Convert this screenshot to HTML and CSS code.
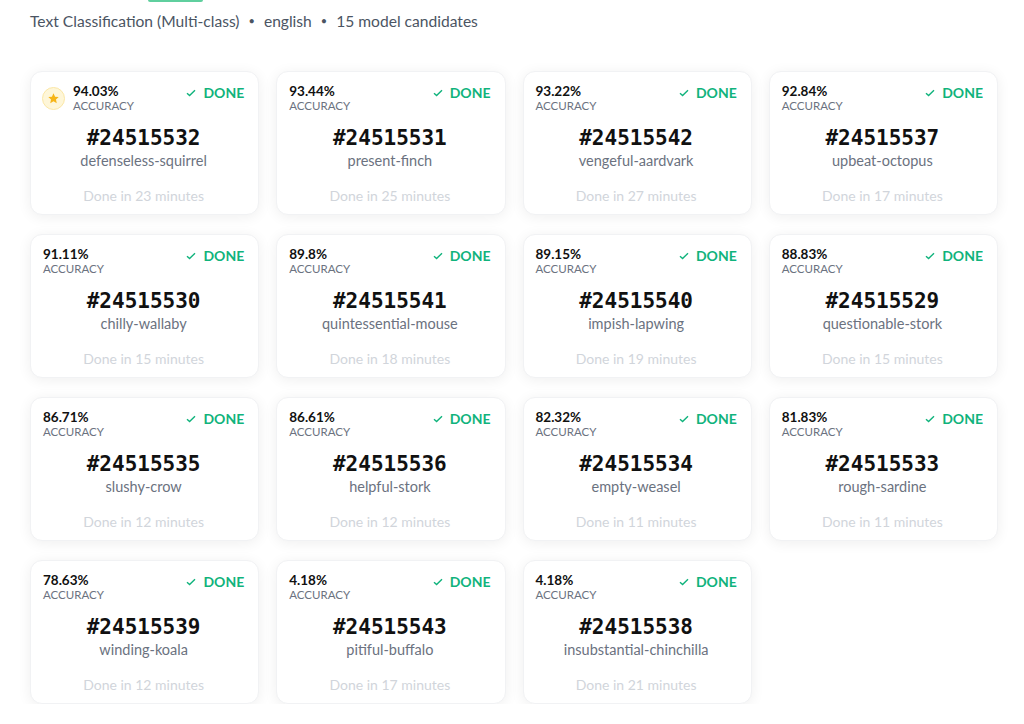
FILE: index.html
```html
<!DOCTYPE html>
<html>
<head>
<meta charset="UTF-8">
<title>Model candidates</title>
<link rel="stylesheet" href="styles.css">
</head>
<body>

<div class="tabbar"><span class="tab-active"></span></div>

<div class="summary">
	Text Classification (Multi-class)
	<span class="dot">&bull;</span> english
	<span class="dot">&bull;</span> 15 model candidates
</div>

<div class="grid">

	<div class="card">
		<div class="top">
			<div class="score">
				<span class="star">
					<svg width="13" height="13" viewBox="0 0 24 24"><path d="M12 2.5l2.9 6.2 6.7.7-5 4.6 1.4 6.7L12 17.3l-6 3.4 1.4-6.7-5-4.6 6.7-.7z" fill="#f6b517"/></svg>
				</span>
				<div>
					<div class="pct">94.03%</div>
					<div class="label">ACCURACY</div>
				</div>
			</div>
			<div class="status"><svg width="10" height="8" viewBox="0 0 10 8"><path d="M1 4.2l2.6 2.4L9 1.2" fill="none" stroke="#10b37c" stroke-width="1.4"/></svg>DONE</div>
		</div>
		<div class="id">#24515532</div>
		<div class="name">defenseless-squirrel</div>
		<div class="time">Done in 23 minutes</div>
	</div>

	<div class="card">
		<div class="top">
			<div class="score"><div><div class="pct">93.44%</div><div class="label">ACCURACY</div></div></div>
			<div class="status"><svg width="10" height="8" viewBox="0 0 10 8"><path d="M1 4.2l2.6 2.4L9 1.2" fill="none" stroke="#10b37c" stroke-width="1.4"/></svg>DONE</div>
		</div>
		<div class="id">#24515531</div>
		<div class="name">present-finch</div>
		<div class="time">Done in 25 minutes</div>
	</div>

	<div class="card">
		<div class="top">
			<div class="score"><div><div class="pct">93.22%</div><div class="label">ACCURACY</div></div></div>
			<div class="status"><svg width="10" height="8" viewBox="0 0 10 8"><path d="M1 4.2l2.6 2.4L9 1.2" fill="none" stroke="#10b37c" stroke-width="1.4"/></svg>DONE</div>
		</div>
		<div class="id">#24515542</div>
		<div class="name">vengeful-aardvark</div>
		<div class="time">Done in 27 minutes</div>
	</div>

	<div class="card">
		<div class="top">
			<div class="score"><div><div class="pct">92.84%</div><div class="label">ACCURACY</div></div></div>
			<div class="status"><svg width="10" height="8" viewBox="0 0 10 8"><path d="M1 4.2l2.6 2.4L9 1.2" fill="none" stroke="#10b37c" stroke-width="1.4"/></svg>DONE</div>
		</div>
		<div class="id">#24515537</div>
		<div class="name">upbeat-octopus</div>
		<div class="time">Done in 17 minutes</div>
	</div>

	<div class="card">
		<div class="top">
			<div class="score"><div><div class="pct">91.11%</div><div class="label">ACCURACY</div></div></div>
			<div class="status"><svg width="10" height="8" viewBox="0 0 10 8"><path d="M1 4.2l2.6 2.4L9 1.2" fill="none" stroke="#10b37c" stroke-width="1.4"/></svg>DONE</div>
		</div>
		<div class="id">#24515530</div>
		<div class="name">chilly-wallaby</div>
		<div class="time">Done in 15 minutes</div>
	</div>

	<div class="card">
		<div class="top">
			<div class="score"><div><div class="pct">89.8%</div><div class="label">ACCURACY</div></div></div>
			<div class="status"><svg width="10" height="8" viewBox="0 0 10 8"><path d="M1 4.2l2.6 2.4L9 1.2" fill="none" stroke="#10b37c" stroke-width="1.4"/></svg>DONE</div>
		</div>
		<div class="id">#24515541</div>
		<div class="name">quintessential-mouse</div>
		<div class="time">Done in 18 minutes</div>
	</div>

	<div class="card">
		<div class="top">
			<div class="score"><div><div class="pct">89.15%</div><div class="label">ACCURACY</div></div></div>
			<div class="status"><svg width="10" height="8" viewBox="0 0 10 8"><path d="M1 4.2l2.6 2.4L9 1.2" fill="none" stroke="#10b37c" stroke-width="1.4"/></svg>DONE</div>
		</div>
		<div class="id">#24515540</div>
		<div class="name">impish-lapwing</div>
		<div class="time">Done in 19 minutes</div>
	</div>

	<div class="card">
		<div class="top">
			<div class="score"><div><div class="pct">88.83%</div><div class="label">ACCURACY</div></div></div>
			<div class="status"><svg width="10" height="8" viewBox="0 0 10 8"><path d="M1 4.2l2.6 2.4L9 1.2" fill="none" stroke="#10b37c" stroke-width="1.4"/></svg>DONE</div>
		</div>
		<div class="id">#24515529</div>
		<div class="name">questionable-stork</div>
		<div class="time">Done in 15 minutes</div>
	</div>

	<div class="card">
		<div class="top">
			<div class="score"><div><div class="pct">86.71%</div><div class="label">ACCURACY</div></div></div>
			<div class="status"><svg width="10" height="8" viewBox="0 0 10 8"><path d="M1 4.2l2.6 2.4L9 1.2" fill="none" stroke="#10b37c" stroke-width="1.4"/></svg>DONE</div>
		</div>
		<div class="id">#24515535</div>
		<div class="name">slushy-crow</div>
		<div class="time">Done in 12 minutes</div>
	</div>

	<div class="card">
		<div class="top">
			<div class="score"><div><div class="pct">86.61%</div><div class="label">ACCURACY</div></div></div>
			<div class="status"><svg width="10" height="8" viewBox="0 0 10 8"><path d="M1 4.2l2.6 2.4L9 1.2" fill="none" stroke="#10b37c" stroke-width="1.4"/></svg>DONE</div>
		</div>
		<div class="id">#24515536</div>
		<div class="name">helpful-stork</div>
		<div class="time">Done in 12 minutes</div>
	</div>

	<div class="card">
		<div class="top">
			<div class="score"><div><div class="pct">82.32%</div><div class="label">ACCURACY</div></div></div>
			<div class="status"><svg width="10" height="8" viewBox="0 0 10 8"><path d="M1 4.2l2.6 2.4L9 1.2" fill="none" stroke="#10b37c" stroke-width="1.4"/></svg>DONE</div>
		</div>
		<div class="id">#24515534</div>
		<div class="name">empty-weasel</div>
		<div class="time">Done in 11 minutes</div>
	</div>

	<div class="card">
		<div class="top">
			<div class="score"><div><div class="pct">81.83%</div><div class="label">ACCURACY</div></div></div>
			<div class="status"><svg width="10" height="8" viewBox="0 0 10 8"><path d="M1 4.2l2.6 2.4L9 1.2" fill="none" stroke="#10b37c" stroke-width="1.4"/></svg>DONE</div>
		</div>
		<div class="id">#24515533</div>
		<div class="name">rough-sardine</div>
		<div class="time">Done in 11 minutes</div>
	</div>

	<div class="card">
		<div class="top">
			<div class="score"><div><div class="pct">78.63%</div><div class="label">ACCURACY</div></div></div>
			<div class="status"><svg width="10" height="8" viewBox="0 0 10 8"><path d="M1 4.2l2.6 2.4L9 1.2" fill="none" stroke="#10b37c" stroke-width="1.4"/></svg>DONE</div>
		</div>
		<div class="id">#24515539</div>
		<div class="name">winding-koala</div>
		<div class="time">Done in 12 minutes</div>
	</div>

	<div class="card">
		<div class="top">
			<div class="score"><div><div class="pct">4.18%</div><div class="label">ACCURACY</div></div></div>
			<div class="status"><svg width="10" height="8" viewBox="0 0 10 8"><path d="M1 4.2l2.6 2.4L9 1.2" fill="none" stroke="#10b37c" stroke-width="1.4"/></svg>DONE</div>
		</div>
		<div class="id">#24515543</div>
		<div class="name">pitiful-buffalo</div>
		<div class="time">Done in 17 minutes</div>
	</div>

	<div class="card">
		<div class="top">
			<div class="score"><div><div class="pct">4.18%</div><div class="label">ACCURACY</div></div></div>
			<div class="status"><svg width="10" height="8" viewBox="0 0 10 8"><path d="M1 4.2l2.6 2.4L9 1.2" fill="none" stroke="#10b37c" stroke-width="1.4"/></svg>DONE</div>
		</div>
		<div class="id">#24515538</div>
		<div class="name">insubstantial-chinchilla</div>
		<div class="time">Done in 21 minutes</div>
	</div>

</div>

</body>
</html>
```

FILE: styles.css
```css
body
{
	margin: 0;
	background: #fff;
	font-family: "Lato", "Noto Sans", sans-serif;
	color: #111827;
}

/* tab strip at the very top, only the active underline shows */
.tabbar { height: 2px; padding-left: 148px; }
.tab-active
{
	display: block;
	width: 55px; height: 2px;
	background: #5fcf9e;
	border-radius: 0 0 2px 2px;
}

.summary
{
	padding: 9px 30px 0;
	font-size: 15.6px;
	line-height: 20px;
	color: #4b5563;
}
.dot { font-size: 11px; margin: 0 5px; vertical-align: 2px; color: #4b5563; }

.grid
{
	display: grid;
	grid-template-columns: repeat(4, 1fr);
	column-gap: 17px;
	row-gap: 19px;
	width: 968px;
	padding: 40px 0 0 30px;
}

.card
{
	height: 144px;
	box-sizing: border-box;
	padding: 11px 14px 0 12px;
	background: #fff;
	border: 1px solid #f1f2f4;
	border-radius: 12px;
	box-shadow: 0 2px 14px rgba(0, 0, 0, 0.065);
	text-align: center;
}

.top { display: flex; justify-content: space-between; align-items: flex-start; text-align: left; }
.score { display: flex; align-items: center; gap: 8px; }

.star
{
	display: flex; align-items: center; justify-content: center;
	width: 21px; height: 21px;
	margin-left: -1px;
	border-radius: 50%;
	background: #fef6d8;
	border: 1px solid #fbe7a6;
}

.pct { font-size: 13.5px; font-weight: bold; line-height: 16px; color: #111; }
.label { font-size: 11.5px; line-height: 14px; color: #6b7280; }

.status
{
	display: flex; align-items: center; gap: 7px;
	margin-top: 2px;
	font-size: 14px; font-weight: bold; line-height: 16px;
	color: #10b37c;
}

.id
{
	margin-top: 12px;
	font-family: "DejaVu Sans Mono", monospace;
	font-size: 21px; font-weight: bold;
	line-height: 26px;
	color: #111;
}
.name { font-size: 14.5px; line-height: 20px; color: #6b7280; }
.time { margin-top: 15px; font-size: 14px; line-height: 20px; color: #d1d5db; }
```
